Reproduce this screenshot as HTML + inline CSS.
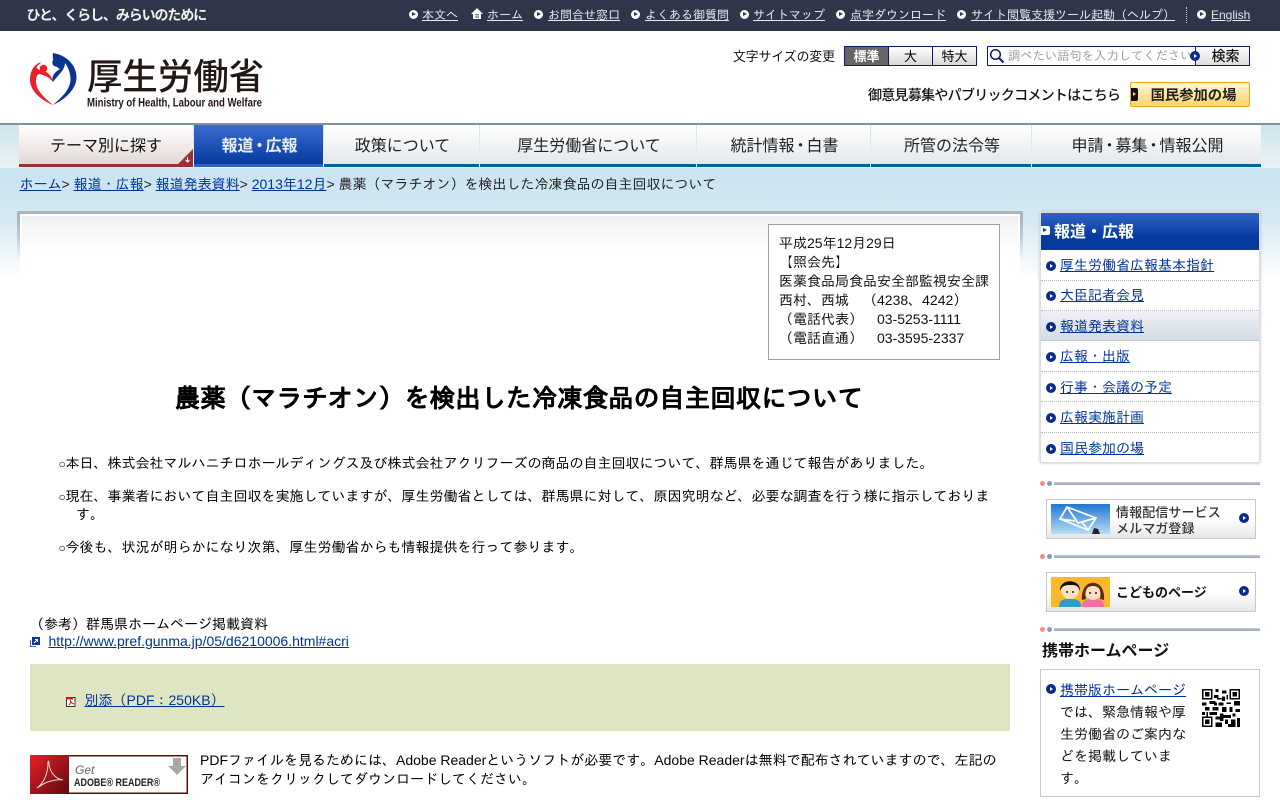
<!DOCTYPE html>
<html lang="ja"><head><meta charset="utf-8"><title>農薬(マラチオン)を検出した冷凍食品の自主回収について</title>
<style>
html,body{margin:0;padding:0;width:1280px;height:800px;overflow:hidden;background:#fff}
body{position:relative;font:14px/19px "Liberation Sans","IPAGothic","Noto Sans CJK JP",sans-serif;color:#000}
.a{position:absolute;white-space:nowrap}
a{color:#003399;text-decoration:underline}
.top a{color:#e8e8ee;font-size:12px}
.tx{position:absolute;top:8px;line-height:14px;font-size:12px;white-space:nowrap}
.dot{position:absolute;width:9px;height:9px;border-radius:50%;background:#fff}
.dot:after{content:"";position:absolute;left:3px;top:2px;border-left:4px solid #2f3547;border-top:2.5px solid transparent;border-bottom:2.5px solid transparent}
.nav{position:absolute;top:125px;height:39px;border-bottom:3px solid #006699;background:linear-gradient(#fff,#e4e7ea);text-align:center;line-height:44px;font-size:16px;color:#222;font-family:"Liberation Sans","Noto Sans CJK JP",sans-serif;box-sizing:content-box;text-indent:2px}
.nav b{font-weight:inherit;margin:0 -2px}
.bd{position:absolute;width:10px;height:10px;border-radius:50%;background:#0a2a8c}
.bd:after{content:"";position:absolute;left:4px;top:3px;border-left:3px solid #fff;border-top:2px solid transparent;border-bottom:2px solid transparent}
.sl{position:absolute;left:1060px;line-height:18px}
.line{position:absolute;left:1054px;width:206px;height:3px;background:linear-gradient(#c4ccd8,#98a3b6)}
.p1,.p2{position:absolute;width:5px;height:5px;border-radius:50%}
.p1{left:1040px;background:#ff8888}.p2{left:1047px;background:#8198cc}
.sep{position:absolute;left:1041px;width:218px;border-top:1px dotted #bbb}
.btn{position:absolute;left:1046px;width:208px;height:38px;border:1px solid #c8c8c8;background:linear-gradient(#fff 50%,#e6e6e6)}
.o{display:inline-block;width:7px;font-size:12px;margin-left:-.5px}
</style></head><body>

<div class="a" style="left:0;top:0;width:1280px;height:31px;background:#30364a"></div>
<div class="a" style="left:26.500px;top:7px;color:#f2f2f2;font:bold 14px/16px 'Noto Sans CJK JP',sans-serif;letter-spacing:-1.1px">ひと、くらし、みらいのために</div>
<div class="top">
<i class="dot" style="left:409px;top:10px"></i><span class="tx" style="left:422px"><a href="#">本文へ</a></span>
<svg class="a" style="left:471px;top:8px" width="12" height="12" viewBox="0 0 12 12"><path d="M6 0L0 6h2v5h8V6h2z" fill="#fff"/><path d="M4.500 6h1.200v1.500H4.500zM6.500 6h1.200v1.500H6.500zM4.500 8.300h1.200v1.500H4.500zM6.500 8.300h1.200v1.500H6.500z" fill="#30364a"/></svg><span class="tx" style="left:487px"><a href="#">ホーム</a></span>
<i class="dot" style="left:534px;top:10px"></i><span class="tx" style="left:548px"><a href="#">お問合せ窓口</a></span>
<i class="dot" style="left:631px;top:10px"></i><span class="tx" style="left:645px"><a href="#">よくある御質問</a></span>
<i class="dot" style="left:740px;top:10px"></i><span class="tx" style="left:753px"><a href="#">サイトマップ</a></span>
<i class="dot" style="left:836px;top:10px"></i><span class="tx" style="left:850px"><a href="#">点字ダウンロード</a></span>
<i class="dot" style="left:957px;top:10px"></i><span class="tx" style="left:971px"><a href="#">サイト閲覧支援ツール起動（ヘルプ）</a></span>
<div class="a" style="left:1186px;top:7px;height:16px;border-left:1px dotted #ccc"></div>
<i class="dot" style="left:1197px;top:10px"></i><span class="tx" style="left:1211px"><a href="#">English</a></span>
</div>

<svg class="a" style="left:0;top:31px" width="280" height="92" viewBox="0 31 280 92">
<path d="M53 53C66 55 77 65 76.500 78C76 90 64 100 53 105C62 97 71 89 70.500 78C70 72 68 67 65 63C65 70 58 75 53 82C51 76 55 72 60 69C54 66 52 58 53 53Z" fill="#0b3391"/>
<circle cx="56.500" cy="62.500" r="4.200" fill="#0b3391"/>
<path d="M41 62C33 65 30 72 30 80C30 92 43 101 53 105C45 98 36 91 36 81C36 77 37 75 39 74C44 75 49 77 53 82C52 76 47 71 43 71C39 70 37 69 36.500 67C38 65 40 64 41 62Z" fill="#e8212a"/>
<circle cx="43.500" cy="68.500" r="3.800" fill="#e8212a"/>
<text x="87" y="89" font-family="'Noto Sans CJK JP',sans-serif" font-size="36" font-weight="500" fill="#231815" textLength="177" lengthAdjust="spacingAndGlyphs">厚生労働省</text>
<text x="87" y="106.500" font-family="'Liberation Sans',sans-serif" font-size="12" font-weight="bold" fill="#231815" textLength="175" lengthAdjust="spacingAndGlyphs">Ministry of Health, Labour and Welfare</text>
</svg>

<div class="a" style="left:733px;top:48px;font-size:12.800px;line-height:16px;font-family:'Noto Sans CJK JP',sans-serif;color:#111">文字サイズの変更</div>
<div class="a" style="left:844px;top:46px;width:133px;height:20px;border:1px solid #0b1a70;box-sizing:border-box;background:linear-gradient(#fff,#d8d8d8)"></div>
<div class="a" style="left:845px;top:47px;width:43px;height:18px;background:#666;color:#fff;text-align:center;font:bold 13px/18px 'Noto Sans CJK JP',sans-serif">標準</div>
<div class="a" style="left:888px;top:47px;width:45px;height:18px;border-left:1px solid #0b1a70;border-right:1px solid #0b1a70;box-sizing:border-box;text-align:center;font:13px/18px 'Noto Sans CJK JP',sans-serif">大</div>
<div class="a" style="left:933px;top:47px;width:43px;height:18px;text-align:center;font:13px/18px 'Noto Sans CJK JP',sans-serif">特大</div>

<div class="a" style="left:987px;top:46px;width:263px;height:20px;border:1px solid #0b1a70;box-sizing:border-box;background:#fff"></div>
<svg class="a" style="left:989px;top:48px" width="16" height="16" viewBox="0 0 16 16"><circle cx="6.500" cy="6.500" r="4.800" fill="none" stroke="#0b1a70" stroke-width="1.500"/><path d="M10 10l4.500 4.500" stroke="#0b1a70" stroke-width="2"/></svg>
<div class="a" style="left:1008px;top:49px;font-size:12.300px;line-height:15px;color:#a0a0a0">調べたい語句を入力してください</div>
<div class="a" style="left:1195px;top:47px;width:54px;height:18px;border-left:1px solid #0b1a70;box-sizing:border-box;background:linear-gradient(#fff,#dcdcdc);font:500 14px/18px 'Noto Sans CJK JP',sans-serif;text-align:center;padding-left:6px;color:#111">検索</div>
<i class="bd" style="left:1190px;top:51px"></i>

<div class="a" style="left:868px;top:86px;font:500 14px/19px 'Noto Sans CJK JP',sans-serif;letter-spacing:-.72px;color:#111">御意見募集やパブリックコメントはこちら</div>
<div class="a" style="left:1130px;top:82px;width:120px;height:25px;box-sizing:border-box;border:1px solid #f4a520;border-radius:2px;background:linear-gradient(#fff6d8,#ffd36a);font:bold 14.300px/23px 'Noto Sans CJK JP',sans-serif;text-align:center;padding-left:7px;color:#222">国民参加の場</div>
<div class="a" style="left:1131px;top:88px;width:7px;height:13px;background:#111;border-radius:0 2px 2px 0"></div>
<div class="a" style="left:1133px;top:92px;border-left:3px solid #ffd36a;border-top:2.500px solid transparent;border-bottom:2.500px solid transparent"></div>

<div class="a" style="left:0;top:123px;width:1280px;height:2px;background:#7f92a2"></div>
<div class="a" style="left:0;top:125px;width:1280px;height:43px;background:linear-gradient(#cfe4ec,#e9f2f4)"></div>
<div class="a" style="left:0;top:168px;width:1280px;height:112px;background:linear-gradient(#c9e3f0 0,#d4e9f3 45%,#fff 100%)"></div>

<div class="nav" style="left:19px;width:174px;border-bottom-color:#993333;background:linear-gradient(#fff,#e2d9d6);color:#111;text-indent:0">テーマ別に探す</div>
<svg class="a" style="left:178px;top:149px" width="15" height="15" viewBox="0 0 15 15"><path d="M15 0V15H0Z" fill="#993333"/><path d="M9.500 8v5M7.500 11l2 2 2-2" stroke="#fff" fill="none"/></svg>
<div class="nav" style="left:194px;width:129px;background:linear-gradient(#3a6cd0,#073aa0);border-bottom-color:#2f62c4;color:#e8eef8;font-weight:bold">報道<b>・</b>広報</div>
<div class="nav" style="left:324px;width:155px">政策について</div>
<div class="nav" style="left:480px;width:216px">厚生労働省について</div>
<div class="nav" style="left:697px;width:173px">統計情報<b>・</b>白書</div>
<div class="nav" style="left:871px;width:160px">所管の法令等</div>
<div class="nav" style="left:1032px;width:229px">申請<b>・</b>募集<b>・</b>情報公開</div>

<div class="a" style="left:19.500px;top:175px;color:#222"><a href="#">ホーム</a>&gt; <a href="#">報道・広報</a>&gt; <a href="#">報道発表資料</a>&gt; <a href="#">2013年12月</a>&gt; 農薬（マラチオン）を検出した冷凍食品の自主回収について</div>

<div class="a" style="left:17px;top:211px;width:1006px;height:60px;box-sizing:border-box;border:3px solid #aab5c2;border-bottom:0;background:#fff;-webkit-mask-image:linear-gradient(#000 15%,transparent 80%);mask-image:linear-gradient(#000 15%,transparent 80%)"></div>
<div class="a" style="left:20px;top:214px;width:1000px;height:66px;box-sizing:border-box;border:solid #fff;border-width:2px 2px 0;background:linear-gradient(#eff0f2,#fff 55%)"></div>
<div class="a" style="left:18px;top:280px;width:1004px;height:520px;background:#fff"></div>

<div class="a" style="left:768px;top:224px;width:232px;height:136px;box-sizing:border-box;border:1px solid #a0a0a0;background:#fff;padding:9px 10px;color:#111">平成25年12月29日<br>【照会先】<br>医薬食品局食品安全部監視安全課<br>西村、西城　（4238、4242）<br>（電話代表）　03-5253-1111<br>（電話直通）　03-3595-2337</div>

<div class="a" style="left:30px;top:383px;width:978px;text-align:center;font-size:25.500px;line-height:32px;font-weight:bold;font-family:'Liberation Sans','IPAGothic',sans-serif;-webkit-text-stroke:.2px #000">農薬（マラチオン）を検出した冷凍食品の自主回収について</div>

<div class="a" style="left:59px;top:454px"><span class="o">○</span>本日、株式会社マルハニチロホールディングス及び株式会社アクリフーズの商品の自主回収について、群馬県を通じて報告がありました。</div>
<div class="a" style="left:59px;top:487px"><span class="o">○</span>現在、事業者において自主回収を実施していますが、厚生労働省としては、群馬県に対して、原因究明など、必要な調査を行う様に指示しておりま</div>
<div class="a" style="left:76px;top:505px">す。</div>
<div class="a" style="left:59px;top:538px"><span class="o">○</span>今後も、状況が明らかになり次第、厚生労働省からも情報提供を行って参ります。</div>
<div class="a" style="left:30px;top:615px">（参考）群馬県ホームページ掲載資料</div>
<svg class="a" style="left:30px;top:637px" width="10" height="10" viewBox="0 0 10 10"><rect x="2" y="0" width="8" height="8" fill="#0a3a9a"/><path d="M4 6l3-3M5 2.500h2.500V5" stroke="#fff" fill="none"/><path d="M0 3v7h6" stroke="#0a3a9a" fill="none" stroke-width="1.500"/></svg>
<div class="a" style="left:48.500px;top:632px"><a href="#">http://www.pref.gunma.jp/05/d6210006.html#acri</a></div>

<div class="a" style="left:30px;top:664px;width:980px;height:67px;background:#dde5c3"></div>
<svg class="a" style="left:66px;top:697px" width="10" height="10" viewBox="0 0 10 10"><rect x=".5" y=".5" width="8.500" height="9" fill="#fff" stroke="#333"/><rect y="0" width="7" height="2.500" fill="#e01010"/><path d="M3 8C5 6 5 4 4.500 3.500C4 4 6 7 8 7" stroke="#d01010" fill="none"/></svg>
<div class="a" style="left:84.500px;top:691px"><a href="#">別添（PDF：250KB）</a></div>

<svg class="a" style="left:30px;top:755px" width="158" height="39" viewBox="0 0 158 39">
<defs><linearGradient id="g" x1="0" y1="0" x2="1" y2="1"><stop offset="0" stop-color="#e81f27"/><stop offset="1" stop-color="#5e0a10"/></linearGradient></defs>
<rect width="158" height="39" fill="#5e0a10"/><rect width="39" height="39" fill="url(#g)"/><rect x="39" y="1.500" width="117.500" height="36" fill="#fff"/>
<path d="M7 33C14 28 18 18 18 8C18 5 19 6 19 9C20 18 26 24 33 25C27 24 16 26 9 32" fill="none" stroke="#f0d8d8" stroke-width="1"/>
<text x="45" y="19" font-family="'Liberation Sans',sans-serif" font-style="italic" font-size="12" fill="#666">Get</text>
<text x="44" y="31" font-family="'Liberation Sans',sans-serif" font-weight="bold" font-size="11" fill="#222" textLength="86" lengthAdjust="spacingAndGlyphs">ADOBE® READER®</text>
<path d="M143 3h8v8h5l-9 9-9-9h5z" fill="#a8a8a8"/>
</svg>
<div class="a" style="left:200px;top:751px;width:810px;white-space:normal">PDFファイルを見るためには、Adobe Readerというソフトが必要です。Adobe Readerは無料で配布されていますので、左記のアイコンをクリックしてダウンロードしてください。</div>

<!-- sidebar -->
<div class="a" style="left:1040px;top:212px;width:220px;height:251px;box-sizing:border-box;border:1px solid #ddd;box-shadow:0 0 3px #bbb;background:#fff"></div>
<div class="a" style="left:1041px;top:213px;width:218px;height:37px;background:linear-gradient(#2f62c4,#063a9e 65%);color:#fff;font-size:16px;font-weight:bold;line-height:39px;text-indent:13px;font-family:'Liberation Sans','Noto Sans CJK JP',sans-serif">報道・広報</div>
<div class="a" style="left:1041px;top:226px;width:9px;height:9px;background:#fff;border-radius:0 2px 2px 0"></div>
<div class="a" style="left:1043px;top:228px;border-left:4px solid #063a9e;border-top:2.500px solid transparent;border-bottom:2.500px solid transparent"></div>
<div class="a" style="left:1041px;top:311px;width:218px;height:30px;background:linear-gradient(#eff1f5,#d3dbe5)"></div>
<div class="sep" style="top:280px"></div><div class="sep" style="top:310px"></div><div class="sep" style="top:340px"></div><div class="sep" style="top:371px"></div><div class="sep" style="top:401px"></div><div class="sep" style="top:432px"></div>
<i class="bd" style="left:1046px;top:261px"></i><div class="sl" style="top:256px"><a href="#">厚生労働省広報基本指針</a></div>
<i class="bd" style="left:1046px;top:291px"></i><div class="sl" style="top:286px"><a href="#">大臣記者会見</a></div>
<i class="bd" style="left:1046px;top:322px"></i><div class="sl" style="top:317px"><a href="#">報道発表資料</a></div>
<i class="bd" style="left:1046px;top:352px"></i><div class="sl" style="top:347px"><a href="#">広報・出版</a></div>
<i class="bd" style="left:1046px;top:383px"></i><div class="sl" style="top:378px"><a href="#">行事・会議の予定</a></div>
<i class="bd" style="left:1046px;top:413px"></i><div class="sl" style="top:408px"><a href="#">広報実施計画</a></div>
<i class="bd" style="left:1046px;top:444px"></i><div class="sl" style="top:439px"><a href="#">国民参加の場</a></div>

<i class="p1" style="top:481px"></i><i class="p2" style="top:481px"></i><div class="line" style="top:482px"></div>
<div class="btn" style="top:499px"></div>
<svg class="a" style="left:1051px;top:504px" width="59" height="30" viewBox="0 0 59 30"><defs><linearGradient id="s" x1="0" y1="0" x2="0" y2="1"><stop offset="0" stop-color="#1f78d0"/><stop offset="1" stop-color="#b8dcf4"/></linearGradient></defs><rect width="59" height="30" fill="url(#s)"/><path d="M16 3L45 14L37 26L9 15ZM16 3L27 19L45 14M9 15L24 17M37 26L31 18" fill="none" stroke="#fff" stroke-width="1.700"/><path d="M41 30l2-6 4 1 2 5z" fill="#223"/></svg>
<div class="a" style="left:1116px;top:504px;font:500 13px/16px 'Noto Sans CJK JP',sans-serif;color:#333;letter-spacing:.1px">情報配信サービス<br>メルマガ登録</div>
<i class="bd" style="left:1239px;top:513px"></i>

<i class="p1" style="top:554px"></i><i class="p2" style="top:554px"></i><div class="line" style="top:555px"></div>
<div class="btn" style="top:572px"></div>
<svg class="a" style="left:1051px;top:577px" width="59" height="30" viewBox="0 0 59 30"><rect width="59" height="30" fill="#fbb82a"/><path d="M8 30c0-7 4-8 11-8s11 1 11 8z" fill="#2e9cc8"/><path d="M31 30c0-7 4-8 11-8s11 1 11 8z" fill="#f070a0"/><circle cx="19" cy="13" r="9" fill="#fce0c0"/><path d="M9 14C8 1 30 1 29 14C27 8 24 8 19 8C14 8 11 9 9 14Z" fill="#111"/><circle cx="42" cy="15" r="8" fill="#fce0c0"/><path d="M31 23C29 0 55 0 53 23L49 22C51 12 47 9 42 9C37 9 33 12 35 22Z" fill="#5a2a18"/><circle cx="16" cy="15" r="1" fill="#222"/><circle cx="22" cy="15" r="1" fill="#222"/><circle cx="39" cy="16" r="1" fill="#222"/><circle cx="45" cy="16" r="1" fill="#222"/></svg>
<div class="a" style="left:1116px;top:583px;font:bold 13px/17px 'Noto Sans CJK JP',sans-serif;color:#111">こどものページ</div>
<i class="bd" style="left:1239px;top:586px"></i>

<i class="p1" style="top:627px"></i><i class="p2" style="top:627px"></i><div class="line" style="top:628px"></div>
<div class="a" style="left:1042px;top:642px;font-size:16px;line-height:20px;font-weight:bold;font-family:'Liberation Sans','Noto Sans CJK JP',sans-serif;color:#111">携帯ホームページ</div>
<div class="a" style="left:1040px;top:669px;width:220px;height:128px;box-sizing:border-box;border:1px solid #c8c8c8"></div>
<i class="bd" style="left:1046px;top:684px"></i>
<div class="a" style="left:1060px;top:679px;width:128px;white-space:normal;line-height:22px;color:#111"><a href="#">携帯版ホームページ</a>では、緊急情報や厚生労働省のご案内などを掲載しています。</div>
<svg class="a" style="left:1202px;top:689px" width="38" height="38" viewBox="0 0 25 25" shape-rendering="crispEdges"><rect width="25" height="25" fill="#fff"/><path d="M0 0h7v7H0zM18 0h7v7h-7zM0 18h7v7H0z" fill="#000"/><path d="M1 1h5v5H1zM19 1h5v5h-5zM1 19h5v5H1z" fill="#fff"/><path d="M2 2h3v3H2zM20 2h3v3h-3zM2 20h3v3H2z" fill="#000"/><path d="M9 0h2v2H9zM13 1h3v2h-3zM8 4h3v2H8zM13 5h2v3h-2zM0 9h3v2H0zM5 8h4v2H5zM11 9h3v2h-3zM16 9h3v1h-3zM21 8h4v3h-4zM2 12h3v2H2zM7 12h4v2H7zM13 12h3v3h-3zM18 12h2v3h-2zM22 13h3v2h-3zM0 15h2v2H0zM5 15h5v2H5zM9 18h3v2H9zM14 17h5v2h-5zM9 22h4v3H9zM15 20h2v3h-2zM19 20h3v3h-3zM23 19h2v6h-2zM17 23h5v2h-5zM8 9h2v2H8zM3 15h1v3H3zM10 6h3v1h-3zM16 4h1v3h-1zM20 16h2v2h-2zM12 16h2v5h-2z" fill="#000"/></svg>

</body></html>
